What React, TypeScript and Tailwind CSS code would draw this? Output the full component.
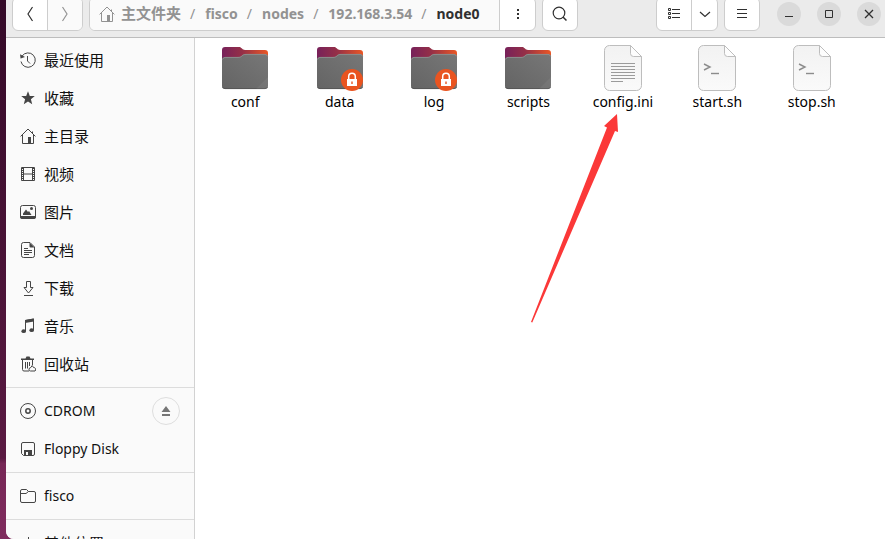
import type { ReactNode } from 'react';

const stroke = { fill: 'none', stroke: 'currentColor', strokeWidth: 1 } as const;

function Glyph({ children, size = 16 }: { children: ReactNode; size?: number }) {
  return (
    <svg width={size} height={size} viewBox={`0 0 ${size} ${size}`} aria-hidden="true" className="block shrink-0">
      {children}
    </svg>
  );
}

const HomeIcon = () => (
  <Glyph>
    <path {...stroke} d="M.6 8.4 8 1l7.4 7.4M2.5 7v8.5h11V7M12.5 5V3.5" />
    <path fill="currentColor" d="M8 9h3v6.5H8z" />
  </Glyph>
);

const RecentIcon = () => (
  <Glyph>
    <path {...stroke} d="M2 4.2A7.2 7.2 0 1 1 1 9.5" />
    <path {...stroke} d="M7.5 4v5l2.5 2.5" />
    <path fill="currentColor" d="M0 2.2 5 5 .6 6.6z" />
  </Glyph>
);

const StarIcon = () => (
  <Glyph>
    <path fill="currentColor" d="m8 1.2 1.8 4.7 5 .2-3.9 3.2 1.3 4.9L8 11.4l-4.2 2.8 1.3-4.9L1.2 6.1l5-.2z" />
  </Glyph>
);

const FilmIcon = () => (
  <Glyph>
    <path {...stroke} d="M1.5 1.5h13v13h-13zM3.5 1.5v13M12.5 1.5v13M3.5 8h9" />
    <path {...stroke} strokeWidth={2} strokeDasharray="1 1" d="M2.5 2v12M13.5 2v12" />
  </Glyph>
);

const PictureIcon = () => (
  <Glyph>
    <rect {...stroke} x=".5" y="1.5" width="15" height="13" rx="2" />
    <path fill="currentColor" d="M0 12h16v1a2 2 0 0 1-2 2H2a2 2 0 0 1-2-2zM3 11V9.5L6 5.5 8 8l1-1 2.5 4z" />
    <circle cx="11.5" cy="4.5" r="1.5" fill="currentColor" />
  </Glyph>
);

const DocumentIcon = () => (
  <Glyph>
    <path {...stroke} d="M3.5.5H10l4.5 4.5v8.5a2 2 0 0 1-2 2h-9a2 2 0 0 1-2-2v-11a2 2 0 0 1 2-2z" />
    <path fill="currentColor" d="M9.5.5 14.5 5.5h-4a1 1 0 0 1-1-1z" />
    <path {...stroke} d="M4 6.5h4M4 8.5h8M4 10.5h8M4 12.5h5" />
  </Glyph>
);

const DownloadIcon = () => (
  <Glyph>
    <path {...stroke} d="M6.5 1.5h4v6H13L8.5 13 4 7.5h2.5zM4 15.5h9" />
  </Glyph>
);

const MusicIcon = () => (
  <Glyph>
    <path {...stroke} d="M5.5 13V2.5l8-1.5v11" />
    <path fill="currentColor" d="m5 2 9-1.5v3L5 5z" />
    <ellipse cx="3.7" cy="13.2" rx="2.3" ry="1.9" fill="currentColor" />
    <ellipse cx="11.7" cy="12.2" rx="2.3" ry="1.9" fill="currentColor" />
  </Glyph>
);

const TrashIcon = () => (
  <Glyph>
    <path fill="currentColor" d="M1 2.5h4.5L6.5.5h3l1 2H14V4H1z" />
    <path {...stroke} d="M2.5 4v9.5a1.5 1.5 0 0 0 1.5 1.5h5M12.5 4v5M5.5 6v6.500M7.5 6v6.500M9.5 6v4" />
    <path fill="#fafafa" stroke="currentColor" d="M9 13.500a2 2 0 0 1 1.800-2l1.400-2 1.300 2a2 2 0 0 1 1.500 3.500h-4.500A1.500 1.500 0 0 1 9 13.500z" />
  </Glyph>
);

const DiscIcon = () => (
  <Glyph>
    <circle {...stroke} cx="8" cy="8" r="7.5" />
    <circle {...stroke} strokeWidth={1.5} cx="8" cy="8" r="2.2" />
  </Glyph>
);

const FloppyIcon = () => (
  <Glyph>
    <path {...stroke} d="M3 1.5h10a1.5 1.5 0 0 1 1.5 1.5v10a1.5 1.5 0 0 1-1.5 1.5H3.5l-2-2V3A1.5 1.5 0 0 1 3 1.5z" />
    <path fill="currentColor" fillRule="evenodd" d="M4 9h8v6H4zm2 2v3h2v-3z" />
  </Glyph>
);

const FolderOutlineIcon = () => (
  <Glyph>
    <path {...stroke} d="M2 1.5h4.5l2 2H14A1.5 1.5 0 0 1 15.5 5v8a1.5 1.5 0 0 1-1.5 1.5H2A1.5 1.5 0 0 1 .5 13V3A1.5 1.5 0 0 1 2 1.5zM.5 5.5H6l2.5-2" />
  </Glyph>
);

const PlusIcon = () => (
  <Glyph>
    <path {...stroke} d="M8.5 2v12M2 8.5h12" />
  </Glyph>
);

const FolderArt = ({ locked }: { locked?: boolean }) => (
  <svg width="48" height="48" viewBox="0 0 48 48" aria-hidden="true" className="block">
    <defs>
      <linearGradient id="folder-back" x1="0" x2="1">
        <stop offset="0" stopColor="#77215a" />
        <stop offset=".45" stopColor="#963047" />
        <stop offset="1" stopColor="#ea5725" />
      </linearGradient>
      <linearGradient id="folder-front" x1="0" y1="1" x2="1" y2="0">
        <stop offset="0" stopColor="#646464" />
        <stop offset="1" stopColor="#777" />
      </linearGradient>
    </defs>
    <path fill="url(#folder-back)" d="M4 3h14c1.5 0 2 .6 3 1.6S22.5 6 24 6h20a3 3 0 0 1 3 3v20H1V6a3 3 0 0 1 3-3z" />
    <path fill="url(#folder-front)" d="M4 13h13c2 0 3-.5 4-1.5s2-1.5 4-1.5h19a3 3 0 0 1 3 3v29a3 3 0 0 1-3 3H4a3 3 0 0 1-3-3V16a3 3 0 0 1 3-3z" />
    <path fill="none" stroke="#949494" strokeWidth=".8" d="M1.5 15.5A3 3 0 0 1 4 13.4h13c2 0 3-.5 4-1.5s2-1.5 4-1.5h19a3 3 0 0 1 2.6 2" />
    <path fill="none" stroke="#505050" strokeWidth=".8" d="M1.5 43A3 3 0 0 0 4 44.6h40a3 3 0 0 0 2.5-1.6" />
    <path fill="#fff" opacity=".05" d="M47 33v9a3 3 0 0 1-3 3h-9z" />
    {locked && (
      <g>
        <circle cx="36" cy="36" r="11" fill="#e95420" />
        <path fill="none" stroke="#fff" strokeWidth="1.5" d="M32.7 36v-3.5a3.3 3.3 0 0 1 6.6 0V36" />
        <path fill="#fff" fillRule="evenodd" d="M31 35h10v7H31zm4.3 2.5v2.5h1.4v-2.5z" />
      </g>
    )}
  </svg>
);

const FileArt = ({ script }: { script?: boolean }) => (
  <svg width="48" height="48" viewBox="0 0 48 48" aria-hidden="true" className="block">
    <defs>
      <linearGradient id="page-fill" x1="0" y1="0" x2="0" y2="1">
        <stop offset="0" stopColor="#f2f2f2" />
        <stop offset="1" stopColor="#fafafa" />
      </linearGradient>
    </defs>
    <path fill="url(#page-fill)" stroke="#bdbdbd" d="M10.500 1.500h21l11 11v29a5 5 0 0 1-5 5h-27a5 5 0 0 1-5-5v-35a5 5 0 0 1 5-5z" />
    <path fill="#fdfdfd" stroke="#bdbdbd" d="m31.500 1.500 11 11h-8a3 3 0 0 1-3-3z" />
    {script ? (
      <g fill="none" stroke="#8c8c8c" strokeWidth="1.4">
        <path d="m11 20 6 3-6 3" />
        <path d="M18 29.500h8" />
      </g>
    ) : (
      <path stroke="#9b9b9b" d="M12 19.500h24M12 22.500h24M12 25.500h24M12 28.500h24M12 31.500h24M12 34.500h24M12 37.500h12" />
    )}
  </svg>
);

const places = [
  { name: '最近使用', icon: <RecentIcon /> },
  { name: '收藏', icon: <StarIcon /> },
  { name: '主目录', icon: <HomeIcon /> },
  { name: '视频', icon: <FilmIcon /> },
  { name: '图片', icon: <PictureIcon /> },
  { name: '文档', icon: <DocumentIcon /> },
  { name: '下载', icon: <DownloadIcon /> },
  { name: '音乐', icon: <MusicIcon /> },
  { name: '回收站', icon: <TrashIcon /> },
];

const files = [
  { name: 'conf', art: <FolderArt /> },
  { name: 'data', art: <FolderArt locked /> },
  { name: 'log', art: <FolderArt locked /> },
  { name: 'scripts', art: <FolderArt /> },
  { name: 'config.ini', art: <FileArt />, marked: true },
  { name: 'start.sh', art: <FileArt script /> },
  { name: 'stop.sh', art: <FileArt script /> },
];

const path = ['fisco', 'nodes', '192.168.3.54', 'node0'];

function Place({ name, icon, latin }: { name: string; icon: ReactNode; latin?: boolean }) {
  return (
    <button type="button" className="flex h-[38px] min-w-0 flex-1 items-center gap-2 pl-3.5 text-left">
      <span className="text-[#454545]">{icon}</span>
      <span className={latin ? 'text-sm' : 'text-[15px]'}>{name}</span>
    </button>
  );
}

const Rule = () => <hr className="my-1 border-[#dcdcdc]" />;

const raised = 'flex h-[34px] shrink-0 overflow-hidden rounded-md border border-[#cdcdcd] bg-white';
const center = 'flex h-full items-center justify-center';
const windowButton = 'flex size-6 items-center justify-center rounded-full bg-[#dadada]';

function Header() {
  return (
    <header className="flex h-[38px] shrink-0 items-end gap-1.5 overflow-hidden border-b border-[#bdbdbd] bg-[#ebebeb] pr-1 pb-1.5 pl-1.5 text-[#303030]">
      <div className={raised}>
        <button type="button" aria-label="后退" className={`${center} w-[35px] border-r border-[#cdcdcd]`}>
          <Glyph><path {...stroke} strokeWidth={1.2} d="M10.500 1 6 8l4.500 7" /></Glyph>
        </button>
        <button type="button" aria-label="前进" className={`${center} w-[34px] bg-[#fafafa] text-[#959595]`}>
          <Glyph><path {...stroke} strokeWidth={1.2} d="M5.500 1 10 8l-4.500 7" /></Glyph>
        </button>
      </div>

      <div className={`${raised} w-[447px]`}>
        <nav aria-label="路径" className="flex min-w-0 flex-1 items-center gap-[9px] border-r border-[#cdcdcd] bg-[#fafafa] pl-[9px] text-sm font-bold text-[#929292]">
          <button type="button" className="flex items-center gap-1.5">
            <HomeIcon />
            <span className="text-[15px]">主文件夹</span>
          </button>
          {path.map((part, i) => (
            <span key={part} className="flex items-center gap-2.5">
              <span className="font-normal">/</span>
              <button type="button" className={i === path.length - 1 ? 'text-[#303030]' : ''}>{part}</button>
            </span>
          ))}
        </nav>
        <button type="button" aria-label="更多" className={`${center} w-[35px]`}>
          <Glyph><path fill="currentColor" d="M7 3h2v2H7zM7 7h2v2H7zM7 11h2v2H7z" /></Glyph>
        </button>
      </div>

      <div className={raised}>
        <button type="button" aria-label="搜索" className={`${center} w-[34px]`}>
          <Glyph>
            <circle {...stroke} strokeWidth={1.2} cx="7" cy="7" r="5.8" />
            <path {...stroke} strokeWidth={1.5} d="m11 11 3.500 3.500" />
          </Glyph>
        </button>
      </div>

      <div className="min-w-0 flex-1" />

      <div className={raised}>
        <button type="button" aria-label="列表视图" className={`${center} w-[35px] border-r border-[#cdcdcd]`}>
          <Glyph>
            <path {...stroke} d="M2.500 2.500h2v2h-2zM2.500 6.500h2v2h-2zM2.500 10.500h2v2h-2zM6 3.500h8M6 7.500h8M6 11.500h8" />
          </Glyph>
        </button>
        <button type="button" aria-label="视图选项" className={`${center} w-[25px]`}>
          <Glyph><path {...stroke} strokeWidth={1.2} d="m3 6 5 4.500L13 6" /></Glyph>
        </button>
      </div>

      <div className={raised}>
        <button type="button" aria-label="菜单" className={`${center} w-[34px]`}>
          <Glyph><path {...stroke} d="M3 3.500h10M3 7.500h10M3 11.500h10" /></Glyph>
        </button>
      </div>

      <div className="flex h-[34px] shrink-0 items-center gap-4 pl-[11px]">
        <button type="button" aria-label="最小化" className={windowButton}>
          <Glyph><path {...stroke} d="M4 10.500h8" /></Glyph>
        </button>
        <button type="button" aria-label="最大化" className={windowButton}>
          <Glyph><path {...stroke} d="M4.500 4.500h7v7h-7z" /></Glyph>
        </button>
        <button type="button" aria-label="关闭" className={windowButton}>
          <Glyph><path {...stroke} strokeWidth={1.3} d="m4 4 8 8M12 4l-8 8" /></Glyph>
        </button>
      </div>
    </header>
  );
}

export default function App() {
  return (
    <div className="h-screen overflow-hidden bg-[linear-gradient(#340a28,#5a1a42_85%,#762756_86%,#802c5e)] pl-1.5 font-['Noto_Sans','Noto_Sans_CJK_SC',sans-serif] text-[#111]">
      <div className="flex h-full flex-col overflow-hidden rounded-bl-lg bg-white">
        <Header />
        <div className="flex min-h-0 flex-1">
          <aside className="w-[189px] shrink-0 overflow-hidden border-r border-[#d2d2d2] bg-[#fafafa] pt-[3px]">
            {places.map((p) => (
              <div key={p.name} className="flex"><Place {...p} /></div>
            ))}
            <Rule />
            <div className="flex items-center pr-3.5">
              <Place name="CDROM" icon={<DiscIcon />} latin />
              <button type="button" aria-label="弹出" className="flex size-7 items-center justify-center rounded-full border border-[#dedede] text-[#767676]">
                <Glyph><path fill="currentColor" d="m8 3 4.500 6h-9zM4 11h8v2H4z" /></Glyph>
              </button>
            </div>
            <div className="flex"><Place name="Floppy Disk" icon={<FloppyIcon />} latin /></div>
            <Rule />
            <div className="flex"><Place name="fisco" icon={<FolderOutlineIcon />} latin /></div>
            <Rule />
            <div className="flex"><Place name="其他位置" icon={<PlusIcon />} /></div>
          </aside>

          <main className="grid min-w-0 flex-1 grid-cols-[repeat(auto-fill,minmax(94px,1fr))] content-start pt-1.5 pr-[26px] pl-[3px]">
            {files.map((f) => (
              <div key={f.name} className="relative">
                <button type="button" className="flex w-full flex-col items-center text-sm text-black">
                  {f.art}
                  <span>{f.name}</span>
                </button>
                {f.marked && (
                  <svg width="94" height="212" viewBox="0 0 94 212" aria-hidden="true" className="pointer-events-none absolute top-[68px] right-1/2">
                    <path fill="#fb3838" d="m88 2 1 18-3-1L3.300 210.500 2 210 78 15.500l-3-1.500z" />
                  </svg>
                )}
              </div>
            ))}
          </main>
        </div>
      </div>
    </div>
  );
}
